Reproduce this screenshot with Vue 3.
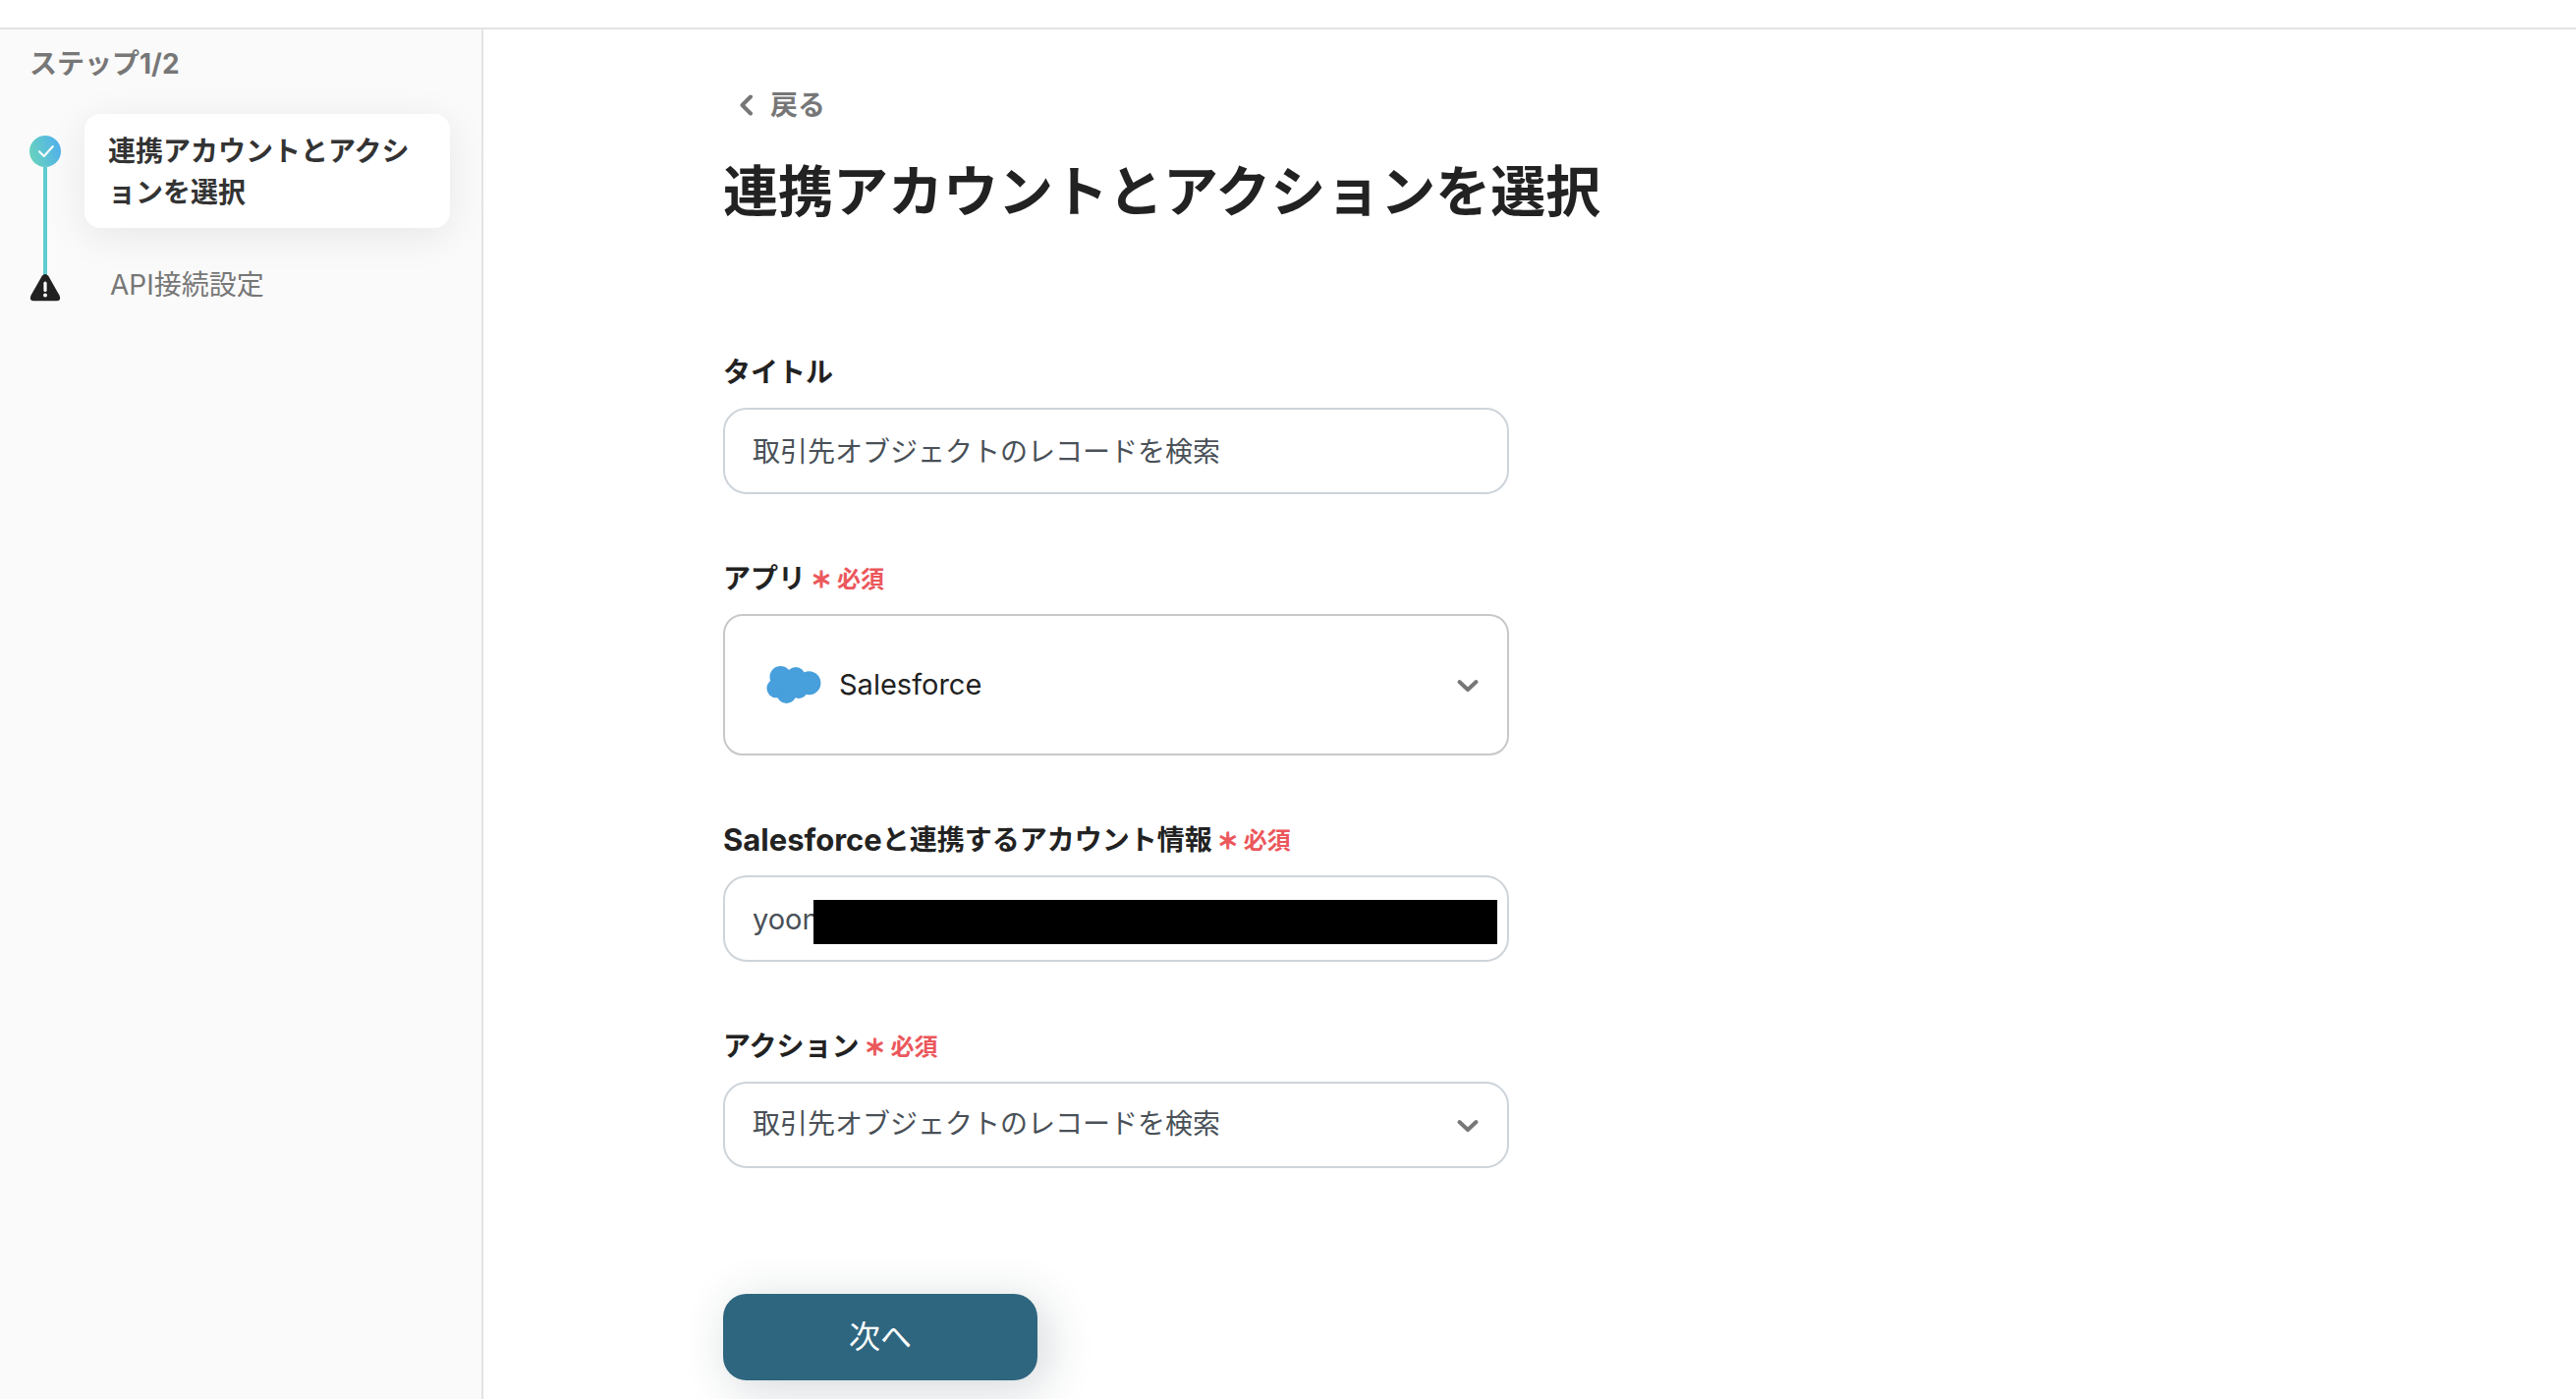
<script setup>
import { ref } from 'vue'

const title = ref('取引先オブジェクトのレコードを検索')
const app = ref('Salesforce')
const account = ref('yoon')
const action = ref('取引先オブジェクトのレコードを検索')
</script>

<template>
  <div class="page">
    <header class="topbar"></header>
    <div class="body">
      <aside class="sidebar">
        <p class="step-count">ステップ1/2</p>
        <ol class="steps">
          <li class="step">
            <div class="rail">
              <svg class="marker" viewBox="0 0 32 32" aria-hidden="true">
                <defs>
                  <linearGradient id="done" x1="0" y1="0.65" x2="1" y2="0.35">
                    <stop offset="0" stop-color="#68d3bd" />
                    <stop offset="1" stop-color="#51b0ed" />
                  </linearGradient>
                </defs>
                <circle cx="16" cy="16" r="16" fill="url(#done)" />
                <path d="M10 16.2L14.8 21L23.8 11" fill="none" stroke="#fff" stroke-width="2" stroke-linecap="round" stroke-linejoin="round" />
              </svg>
              <span class="line"></span>
            </div>
            <a href="#account" class="step-card">連携アカウントとアクションを選択</a>
          </li>
          <li class="step">
            <div class="rail">
              <svg class="marker" viewBox="0 0 32 32" aria-hidden="true">
                <path d="M12.8 2.8Q16 -1 19.2 2.8L30.4 22.6Q32.6 27.6 28 28.3H4Q-0.6 27.6 1.6 22.6Z" fill="#212121" />
                <path d="M16 10.2V17.4" stroke="#fff" stroke-width="3.2" stroke-linecap="round" />
                <circle cx="16" cy="22.4" r="2" fill="#fff" />
              </svg>
            </div>
            <a href="#api" class="step-link">API接続設定</a>
          </li>
        </ol>
      </aside>

      <main class="main">
        <a href="#back" class="back">
          <svg width="16" height="24" viewBox="0 0 16 24" aria-hidden="true">
            <path d="M12 3.5L3.5 12L12 20.5" fill="none" stroke="#777" stroke-width="4" stroke-linecap="round" stroke-linejoin="round" />
          </svg>
          戻る
        </a>
        <h1>連携アカウントとアクションを選択</h1>

        <form class="form" @submit.prevent>
          <div class="field">
            <label for="title">タイトル</label>
            <input id="title" v-model="title" class="control" type="text" />
          </div>

          <div class="field">
            <label for="app">アプリ<span class="required"><span class="mark">＊</span><span>必須</span></span></label>
            <div class="select">
              <svg class="logo" viewBox="0 0 56 40" aria-hidden="true">
                <g fill="#479fdb">
                  <circle cx="14.5" cy="12" r="11" />
                  <circle cx="30" cy="11.5" r="9.5" />
                  <circle cx="43.4" cy="18.2" r="12" />
                  <circle cx="10" cy="23.6" r="9.6" />
                  <circle cx="20.5" cy="29" r="10" />
                  <circle cx="33" cy="25" r="9" />
                  <path d="M10 14L30 6L42 12L40 28L28 30L12 28Z" />
                </g>
              </svg>
              <select id="app" v-model="app" class="control latin app-control">
                <option>Salesforce</option>
              </select>
              <svg class="chevron" viewBox="0 0 24 16" aria-hidden="true">
                <path d="M3.5 4L12 12L20.5 4" fill="none" stroke="#777" stroke-width="4" stroke-linecap="round" stroke-linejoin="round" />
              </svg>
            </div>
          </div>

          <div class="field">
            <label for="account"><span class="product">Salesforce</span>と連携するアカウント情報<span class="required"><span class="mark">＊</span><span>必須</span></span></label>
            <div class="select">
              <input id="account" v-model="account" class="control latin" type="text" />
              <span class="mask"></span>
            </div>
          </div>

          <div class="field">
            <label for="action">アクション<span class="required"><span class="mark">＊</span><span>必須</span></span></label>
            <div class="select">
              <select id="action" v-model="action" class="control">
                <option>取引先オブジェクトのレコードを検索</option>
              </select>
              <svg class="chevron" viewBox="0 0 24 16" aria-hidden="true">
                <path d="M3.5 4L12 12L20.5 4" fill="none" stroke="#777" stroke-width="4" stroke-linecap="round" stroke-linejoin="round" />
              </svg>
            </div>
          </div>

          <button type="submit" class="next">次へ</button>
        </form>
      </main>
    </div>
  </div>
</template>

<style>
body {
  background: #fff;
}
</style>

<style scoped>
.page {
  display: flex;
  flex-direction: column;
  min-height: 100vh;
  box-sizing: border-box;
  font-family: Inter, "Noto Sans CJK JP", sans-serif;
  font-size: 28px;
  line-height: 42px;
  color: #222;
}
.page * {
  box-sizing: border-box;
}
.topbar {
  height: 30px;
  border-bottom: 2px solid #e3e3e3;
}
.body {
  display: flex;
  flex: 1;
}
.sidebar {
  width: 492px;
  flex: none;
  padding: 14px 32px 0 30px;
  background: #fafafa;
  border-right: 2px solid #e3e3e3;
}
.step-count {
  margin: 0;
  font-weight: 700;
  color: #777;
}
.steps {
  margin: 30px 0 0;
  padding: 0;
  list-style: none;
}
.step {
  display: flex;
  gap: 24px;
}
.rail {
  display: flex;
  flex-direction: column;
  align-items: center;
  flex: none;
  width: 32px;
}
.step:first-child .rail {
  padding-top: 22px;
}
.step:last-child .rail {
  padding-top: 6px;
}
.marker {
  display: block;
  flex: none;
  width: 32px;
  height: 32px;
}
.line {
  flex: 1;
  width: 4px;
  margin-bottom: -8px;
  background: #5fcccf;
}
.step a {
  color: #777;
  text-decoration: none;
}
.step .step-card {
  flex: 1;
  margin-bottom: 40px;
  padding: 17px 24px 15px;
  border-radius: 16px;
  background: #fff;
  box-shadow: 0 8px 40px rgba(0, 0, 0, 0.08);
  font-weight: 700;
  color: #333;
  line-break: anywhere;
}
.step-link {
  margin-left: 26px;
  line-height: 36px;
}
.main {
  flex: 1;
  min-width: 0;
  padding: 56px 40px 19px 244px;
}
.back {
  display: flex;
  align-items: center;
  gap: 16px;
  width: max-content;
  margin-left: 16px;
  font-weight: 700;
  color: #777;
  text-decoration: none;
}
h1 {
  margin: 25px 0 120px;
  font-size: 56px;
  line-height: 84px;
  font-weight: 700;
}
.form {
  display: flex;
  flex-direction: column;
  gap: 64px;
  max-width: 800px;
}
.field {
  display: flex;
  flex-direction: column;
  gap: 15px;
}
label {
  display: flex;
  align-items: center;
  padding-top: 1px;
  font-weight: 700;
}
.product {
  font-size: 31px;
}
.required {
  display: flex;
  gap: 4px;
  margin-left: 4px;
  padding-top: 2px;
  font-size: 24px;
  line-height: 40px;
  color: #eb575b;
}
.mark {
  width: 24px;
  font-size: 22px;
  text-align: center;
  -webkit-text-stroke: 1px #eb575b;
}
.control {
  display: block;
  width: 100%;
  height: 88px;
  margin: 0;
  padding: 0 28px 2px;
  border: 2px solid #ced4da;
  border-radius: 24px;
  background: #fff;
  font: inherit;
  color: #495057;
  appearance: none;
}
.latin {
  padding-bottom: 0;
  font-size: 29px;
}
.app-control {
  height: 144px;
  padding-left: 116px;
  border-color: #c8c8c8;
  border-radius: 20px;
  color: #222;
}
.select {
  position: relative;
}
.logo {
  position: absolute;
  left: 44px;
  top: 52px;
  width: 56px;
  height: 40px;
}
.chevron {
  position: absolute;
  right: 30px;
  top: calc(50% - 7px);
  width: 24px;
  height: 16px;
  pointer-events: none;
}
.mask {
  position: absolute;
  right: 12px;
  top: 25px;
  left: 92px;
  height: 45px;
  background: #000;
}
.next {
  width: 320px;
  height: 88px;
  margin-top: 64px;
  padding: 0;
  border: 0;
  border-radius: 24px;
  background: #2f667f;
  box-shadow: 8px 8px 48px rgba(30, 50, 60, 0.2);
  font: inherit;
  font-size: 32px;
  color: #fff;
}
</style>
